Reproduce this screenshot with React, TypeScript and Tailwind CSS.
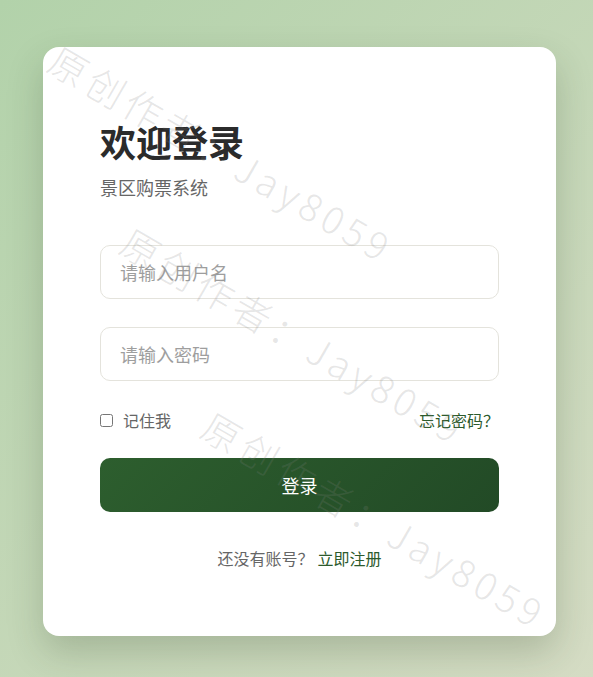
import { useState } from "react";

const marks = [
  { left: "left-[10px]", top: "top-[-11px]" },
  { left: "left-[82px]", top: "top-[171px]" },
  { left: "left-[163px]", top: "top-[355px]" },
];

export default function App() {
  const [remember, setRemember] = useState(false);

  return (
    <main className="min-h-screen w-full pt-[47px] pl-[43px] bg-[linear-gradient(135deg,#b2d2aa,#d5dcc4)] font-['Noto_Sans_CJK_SC',sans-serif]">
      <div className="relative w-[513px] h-[589px] overflow-hidden rounded-[16px] bg-white px-[57px] pt-[72px] shadow-[0_16px_36px_rgba(40,60,30,0.22)]">
        <h1 className="text-[36px] leading-[44px] font-bold text-[#2b2b2b]">欢迎登录</h1>
        <p className="mt-[12px] text-[18px] leading-[24px] text-[#666]">景区购票系统</p>

        <form className="mt-[46px] flex flex-col" onSubmit={(e) => e.preventDefault()}>
          <input
            type="text"
            placeholder="请输入用户名"
            className="h-[54px] w-full rounded-[10px] border border-[#e4e3dc] bg-white px-[19px] text-[18px] text-[#333] outline-none placeholder:text-[#9e9e9e]"
          />
          <input
            type="password"
            placeholder="请输入密码"
            className="mt-[28px] h-[54px] w-full rounded-[10px] border border-[#e4e3dc] bg-white px-[19px] text-[18px] text-[#333] outline-none placeholder:text-[#9e9e9e]"
          />

          <div className="mt-[27px] flex h-[24px] items-center justify-between text-[16px] leading-[24px]">
            <label className="flex items-center text-[#666]">
              <input
                type="checkbox"
                checked={remember}
                onChange={(e) => setRemember(e.target.checked)}
                className="h-[13px] w-[13px]"
              />
              <span className="ml-[10px]">记住我</span>
            </label>
            <a href="#" className="text-[#2c5a2c]">忘记密码？</a>
          </div>

          <button
            type="submit"
            className="mt-[26px] h-[54px] w-full rounded-[10px] bg-[linear-gradient(135deg,#2d5e2e,#224a26)] text-[18px] text-white"
          >
            登录
          </button>
        </form>

        <p className="mt-[34px] text-center text-[16px] leading-[24px] text-[#666]">
          还没有账号？<a href="#" className="ml-1 text-[#2c5a2c]">立即注册</a>
        </p>

        {marks.map((m, i) => (
          <div
            key={i}
            className={`pointer-events-none absolute ${m.left} ${m.top} origin-left rotate-[30deg] whitespace-nowrap text-[38px] leading-[40px] tracking-[5px] font-light text-[rgba(130,130,130,0.2)]`}
          >
            原创作者：Jay8059
          </div>
        ))}
      </div>
    </main>
  );
}
